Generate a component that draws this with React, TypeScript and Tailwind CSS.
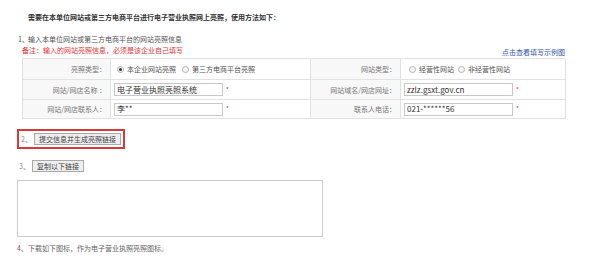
import React from "react";

const font = { fontFamily: '"Noto Sans CJK SC", "Noto Sans", sans-serif' };

function Radio({ checked }: { checked?: boolean }) {
  return (
    <span className="inline-flex items-center justify-center w-[7px] h-[7px] rounded-full border border-[#b5b5b5] bg-[#f4f4f4] mr-[3px]">
      {checked && <span className="w-[3px] h-[3px] rounded-full bg-[#333]" />}
    </span>
  );
}

function Label({ children }: { children: React.ReactNode }) {
  return (
    <div className="flex items-center justify-end pr-[4px] bg-[#f8f8f8] border-r border-b border-[#e2e2e2] text-[#777]">
      {children}
    </div>
  );
}

function Cell({ children }: { children: React.ReactNode }) {
  return (
    <div className="flex items-center pl-[3px] bg-white border-r border-b border-[#e2e2e2]">{children}</div>
  );
}

function Input({ value }: { value: string }) {
  return (
    <>
      <div className="w-[109px] h-[13px] border border-[#c8c8c8] flex items-center pl-[2px] text-[8px] text-[#333]">
        {value}
      </div>
      <span className="ml-[3px] text-[#e03030] text-[6px]">*</span>
    </>
  );
}

export default function App() {
  return (
    <div className="w-[589px] h-[267px] bg-white overflow-hidden text-[7px] leading-[8px] text-[#555]" style={font}>
      <div className="pt-[13px] pl-[28px] font-bold text-[#333]">
        需要在本单位网站或第三方电商平台进行电子营业执照网上亮照，使用方法如下：
      </div>

      <div className="mt-[14px] pl-[18px] flex">
        <span className="w-[10px]">1、</span>
        <span>输入本单位网站或第三方电商平台的网站亮照信息</span>
      </div>

      <div className="mt-[3px] ml-[22px] w-[543px] flex justify-between items-end">
        <span className="text-[#e03333]">备注：输入的网站亮照信息，必须是该企业自己填写</span>
        <span className="text-[#3355aa] translate-y-[2px]">点击查看填写示例图</span>
      </div>

      <div className="mt-[4px] ml-[22px] w-[543px] grid grid-cols-[88px_200px_90px_165px] grid-rows-[21px_20px_19px] border-l border-t border-[#e2e2e2]">
        <Label>亮照类型：</Label>
        <Cell>
          <div className="flex items-center pl-[3px]">
            <Radio checked />
            <span className="mr-[6px]">本企业网站亮照</span>
            <Radio />
            <span>第三方电商平台亮照</span>
          </div>
        </Cell>
        <Label>网站类型：</Label>
        <Cell>
          <div className="flex items-center pl-[5px]">
            <Radio />
            <span className="mr-[4px]">经营性网站</span>
            <Radio />
            <span>非经营性网站</span>
          </div>
        </Cell>

        <Label>网站/网店名称 ：</Label>
        <Cell>
          <Input value="电子营业执照亮照系统" />
        </Cell>
        <Label>网站域名/网店网址：</Label>
        <Cell>
          <Input value="zzlz.gsxt.gov.cn" />
        </Cell>

        <Label>网站/网店联系人：</Label>
        <Cell>
          <Input value="李**" />
        </Cell>
        <Label>联系人电话：</Label>
        <Cell>
          <Input value="021-******56" />
        </Cell>
      </div>

      <div className="mt-[10px] ml-[17px] w-[108px] h-[20px] border-2 border-[#d83a3a] flex items-center pl-[2px]">
        <span className="w-[13px] text-[#888]">2、</span>
        <span className="h-[12px] px-[4px] flex items-center bg-[#eeeeee] border border-[#a9a9a9] text-[#444]">
          提交信息并生成亮照链接
        </span>
      </div>

      <div className="mt-[11px] ml-[19px] flex items-center">
        <span className="w-[13px] text-[#888]">3、</span>
        <span className="h-[12px] px-[4px] flex items-center bg-[#eeeeee] border border-[#a9a9a9] text-[#444]">
          复制以下链接
        </span>
      </div>

      <div className="mt-[8px] ml-[17px] w-[306px] h-[57px] border border-[#cccccc]" />

      <div className="mt-[7px] ml-[17px] text-[#666]">4、下载如下图标，作为电子营业执照亮照图标。</div>
    </div>
  );
}
